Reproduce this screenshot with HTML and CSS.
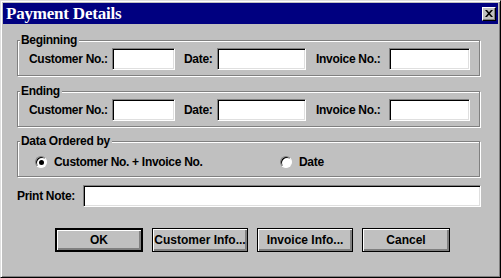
FILE: index.html
```html
<!DOCTYPE html>
<html lang="en">
<head>
    <meta charset="UTF-8">
    <meta name="viewport" content="width=device-width, initial-scale=1.0">
    <title>Payment Details</title>
    <link rel="stylesheet" href="styles.css">
</head>
<body>
    <div class="window">
        <div class="titlebar">
            <span class="title">Payment Details</span>
            <button class="close" aria-label="Close">
                <svg width="8" height="7" viewBox="0 0 8 7"><path d="M0 0h2l2 2.3 2-2.3h2l-3 3.5 3 3.5h-2l-2-2.3-2 2.3h-2l3-3.5z" fill="#000"/></svg>
            </button>
        </div>
        <div class="content">
            <fieldset class="group">
                <legend>Beginning</legend>
                <div class="range-row">
                    <label class="lbl lbl-cust">Customer No.:</label><input type="text" class="field field-cust">
                    <label class="lbl lbl-date">Date:</label><input type="text" class="field field-date">
                    <label class="lbl lbl-inv">Invoice No.:</label><input type="text" class="field field-inv">
                </div>
            </fieldset>
            <fieldset class="group group-next">
                <legend>Ending</legend>
                <div class="range-row">
                    <label class="lbl lbl-cust">Customer No.:</label><input type="text" class="field field-cust">
                    <label class="lbl lbl-date">Date:</label><input type="text" class="field field-date">
                    <label class="lbl lbl-inv">Invoice No.:</label><input type="text" class="field field-inv">
                </div>
            </fieldset>
            <fieldset class="group group-order">
                <legend>Data Ordered by</legend>
                <div class="radio-row">
                    <label class="radio radio-first"><span class="radio-dot checked"></span>Customer No. + Invoice No.</label>
                    <label class="radio"><span class="radio-dot"></span>Date</label>
                </div>
            </fieldset>
            <!-- Print note -->
            <div class="note-row">
                <label class="lbl lbl-note">Print Note:</label><input type="text" class="field field-note">
            </div>
            <div class="buttons">
                <button class="btn btn-ok">OK</button>
                <button class="btn btn-wide">Customer Info...</button>
                <button class="btn btn-wide">Invoice Info...</button>
                <button class="btn">Cancel</button>
            </div>
        </div>
    </div>
</body>
</html>
```

FILE: styles.css
```css
body {
    margin: 0;
    background-color: #c0c0c0;
    font-family: "Liberation Sans", Arial, sans-serif;
    font-size: 12px;
    font-weight: bold;
    letter-spacing: -0.3px;
    color: #000;
}

.window {
    width: 501px;
    height: 278px;
    box-sizing: border-box;
    border: 1px solid;
    border-color: #dfdfdf #000 #000 #dfdfdf;
    box-shadow: inset 1px 1px #fff, inset -1px -1px #808080;
    padding: 2px;
    background-color: #c0c0c0;
}

.titlebar {
    height: 21px;
    background-color: #000080;
    display: flex;
    align-items: center;
    justify-content: space-between;
    padding: 0 2px 0 3px;
}

.title {
    color: #fff;
    font-family: "Liberation Serif", "Times New Roman", serif;
    font-size: 17px;
    font-weight: bold;
    letter-spacing: -0.2px;
}

.close {
    width: 14px;
    height: 14px;
    box-sizing: border-box;
    padding: 0;
    background-color: #c0c0c0;
    border: 1px solid;
    border-color: #fff #000 #000 #fff;
    box-shadow: inset -1px -1px #808080;
    display: flex;
    align-items: center;
    justify-content: center;
}

.content {
    padding: 9px 18px 0 14px;
}

.group {
    margin: 0;
    padding: 0;
    min-width: 0;
    border: 1px solid #808080;
    box-shadow: inset 1px 1px #fff, 1px 1px #fff;
}

.group legend {
    margin-left: 2px;
    padding: 0 2px 0 1px;
    line-height: 14px;
    background-color: #c0c0c0;
}

.group-next {
    margin-top: 8px;
}

.group-order {
    margin-top: 7px;
}

.range-row {
    display: flex;
    align-items: center;
    padding: 1px 0 5px 11px;
}

.lbl {
    white-space: nowrap;
}

.lbl-cust { width: 83px; }
.lbl-date { width: 33px; margin-left: 9px; }
.lbl-inv { width: 73px; margin-left: 10px; }
.lbl-note { width: 66px; }

.field {
    box-sizing: border-box;
    height: 22px;
    margin: 0;
    padding: 0 3px;
    border: 1px solid;
    border-color: #808080 #fff #fff #808080;
    box-shadow: inset 1px 1px #000, inset -1px -1px #dfdfdf;
    background-color: #fff;
    font: inherit;
    outline: none;
}

.field-cust { width: 63px; }
.field-date { width: 89px; }
.field-inv { width: 81px; }
.field-note { flex-grow: 1; }

.radio-row {
    display: flex;
    align-items: center;
    line-height: 14px;
    padding: 7px 0 7px 17px;
}

.radio {
    display: flex;
    align-items: center;
}

.radio-first {
    width: 245px;
}

.radio-dot {
    width: 12px;
    height: 12px;
    box-sizing: border-box;
    border-radius: 50%;
    border: 1px solid;
    border-color: #808080 #fff #fff #808080;
    box-shadow: inset 1px 1px #000;
    background-color: #fff;
    margin-right: 7px;
    display: flex;
    align-items: center;
    justify-content: center;
}

.radio-dot.checked::after {
    content: "";
    width: 5px;
    height: 5px;
    border-radius: 50%;
    background-color: #000;
}

.note-row {
    display: flex;
    align-items: center;
    margin-top: 8px;
    margin-right: -1px;
}

.buttons {
    display: flex;
    gap: 9px;
    margin: 21px 0 0 38px;
}

.btn {
    width: 88px;
    height: 24px;
    box-sizing: border-box;
    padding: 0;
    border: 1px solid #000;
    background-color: #c0c0c0;
    box-shadow: inset 1px 1px #fff, inset -2px -2px #808080;
    font: inherit;
    color: #000;
}

.btn-ok {
    border-width: 2px;
}

.btn-wide {
    width: 96px;
}
```
